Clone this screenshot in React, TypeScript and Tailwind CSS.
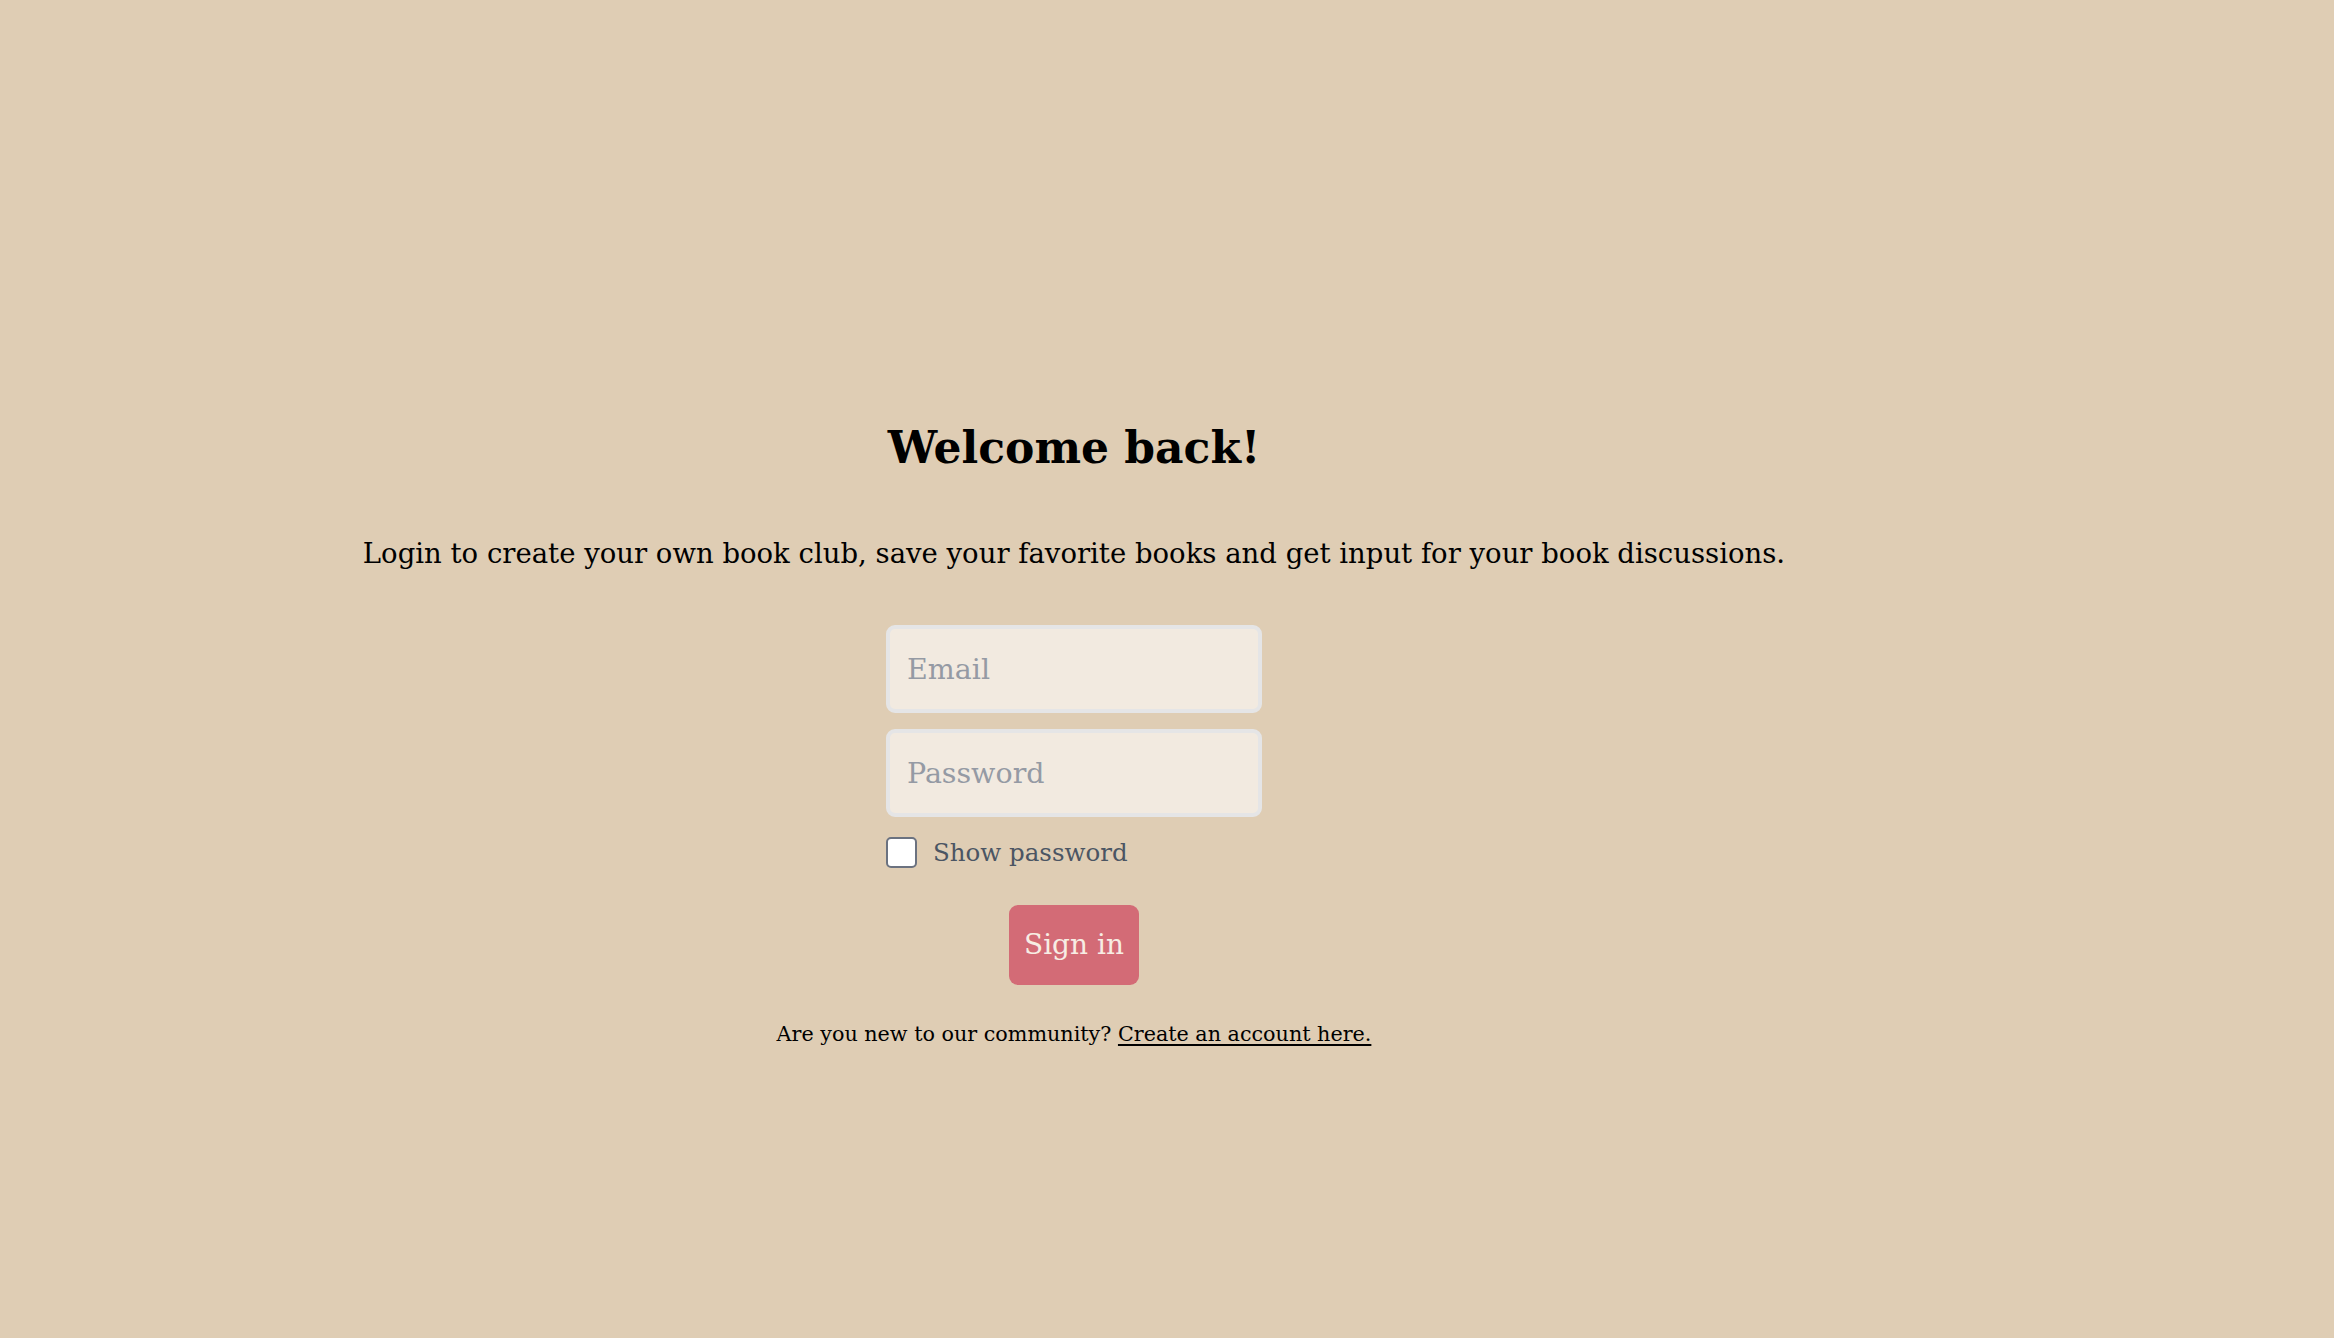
import React from "react";

const serif = "font-['Georgia','DejaVu_Serif',serif]";

const App = () => {
  return (
    <div className={`min-h-screen w-full bg-[#dfcdb4] flex justify-center pr-[186px] ${serif}`}>
      <div className="flex flex-col items-center pt-[420px]">
        {/* ================= Heading ================= */}
        <h1 className="text-[44px] leading-[56px] font-bold text-black">Welcome back!</h1>

        <p className="mt-[57px] text-[27.5px] leading-[40px] text-black">
          Login to create your own book club, save your favorite books and get input for your book discussions.
        </p>

        {/* ================= Form ================= */}
        <form className="mt-[52px] w-[376px] flex flex-col">
          <input
            type="email"
            placeholder="Email"
            className="h-[88px] w-full rounded-[9px] border-[4px] border-[#e5e5e6] bg-[#f2eae0] px-[17px] text-[28.5px] text-black placeholder:text-[#959aa4] outline-none"
          />
          <input
            type="password"
            placeholder="Password"
            className="mt-4 h-[88px] w-full rounded-[9px] border-[4px] border-[#e5e5e6] bg-[#f2eae0] px-[17px] text-[28.5px] text-black placeholder:text-[#959aa4] outline-none"
          />

          <label className="mt-[20px] flex items-center gap-4 text-[24.5px] leading-[31px] text-[#4b5563]">
            <input
              type="checkbox"
              className="appearance-none w-[31px] h-[31px] rounded-[5px] border-2 border-[#6b7280] bg-white shrink-0"
            />
            Show password
          </label>

          <button
            type="button"
            className="mt-[37px] self-center w-[130px] h-[80px] rounded-[9px] bg-[#d36b76] text-[28px] text-[#f7ede4]"
          >
            Sign in
          </button>
        </form>

        <p className="mt-[34px] text-[20.7px] leading-[30px] text-black">
          Are you new to our community?{" "}
          <a href="#" className="underline underline-offset-[3px]">
            Create an account here.
          </a>
        </p>
      </div>
    </div>
  );
};

export default App;
